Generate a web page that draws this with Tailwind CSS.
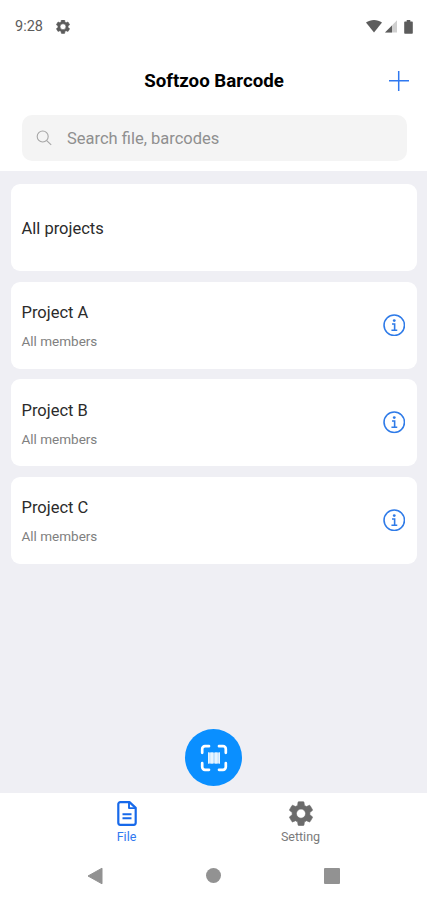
<!DOCTYPE html>
<html lang="en">
<head>
<meta charset="utf-8">
<title>Softzoo Barcode</title>
<script src="https://cdn.jsdelivr.net/npm/@tailwindcss/browser@4"></script>
</head>
<body class="w-[427px] h-[900px] overflow-hidden flex flex-col bg-white font-[Roboto,sans-serif]">
<svg class="hidden">
  <symbol id="info" viewBox="0 0 24 24"><circle cx="12" cy="12" r="10.9" fill="none" stroke="currentColor" stroke-width="1.7"/><circle cx="12" cy="7" r="1.5" fill="currentColor"/><path d="M9.6 10.6h2.8v6.6M9 17.4h6.2" fill="none" stroke="currentColor" stroke-width="1.7"/></symbol>
</svg>
<div class="h-[53px] shrink-0 flex items-center pl-[15px] pr-[14px] text-[#5c5c5c]">
  <span class="text-[14.5px] leading-5 w-[41px] pt-px">9:28</span>
  <svg class="w-[14px] h-[14px]" viewBox="2 2.4 20 20"><path fill="currentColor" stroke="currentColor" stroke-width=".8" fill-rule="evenodd" d="M19.14 12.94c.04-.3.06-.61.06-.94s-.02-.64-.07-.94l2.03-1.58a.49.49 0 0 0 .12-.61l-1.92-3.32a.49.49 0 0 0-.59-.22l-2.39.96c-.5-.38-1.03-.7-1.62-.94l-.36-2.54A.48.48 0 0 0 13.92 2.4h-3.84a.47.47 0 0 0-.47.41l-.36 2.54c-.59.24-1.13.57-1.62.94l-2.39-.96a.48.48 0 0 0-.59.22L2.74 8.87a.47.47 0 0 0 .12.61l2.03 1.58a7 7 0 0 0 0 1.88l-2.03 1.58a.49.49 0 0 0-.12.61l1.92 3.32c.12.22.37.29.59.22l2.39-.96c.5.38 1.03.7 1.62.94l.36 2.54c.05.24.24.41.48.41h3.84c.24 0 .44-.17.47-.41l.36-2.54c.59-.24 1.13-.56 1.62-.94l2.39.96c.22.08.47 0 .59-.22l1.92-3.32a.47.47 0 0 0-.12-.61zM12 16.2a4.2 4.2 0 1 1 0-8.400 4.200 4.200 0 0 1 0 8.400z"/></svg>
  <div class="ml-auto flex items-center">
    <svg class="w-4 h-[13px]" viewBox="0 0 16 13"><path fill="currentColor" d="M0 2.600C4.600-.8 11.400-.8 16 2.600L8 12.600z"/></svg>
    <svg class="ml-[3px] w-3 h-[13px]" viewBox="0 0 12 13"><path fill="#cfcfcf" d="M12 .3v12.200H0z"/><path fill="currentColor" d="M7 5.400v7.100H0z"/></svg>
    <svg class="ml-[7px] w-[9px] h-[14px]" viewBox="0 0 9 14"><path fill="currentColor" d="M2.700 0h3.600v1.400H8a.8.8 0 0 1 .8.8V13a.8.8 0 0 1-.8.8H1a.8.8 0 0 1-.8-.8V2.200a.8.8 0 0 1 .8-.8h1.700z"/></svg>
  </div>
</div>
<header class="h-[62px] shrink-0 grid grid-cols-[1fr_auto_1fr] items-center pb-[7px] pl-[19px] pr-[18px]">
  <span></span>
  <h1 class="text-[18.700px] leading-6 font-bold text-black pt-px">Softzoo Barcode</h1>
  <svg class="justify-self-end w-5 h-5" viewBox="0 0 20 20"><path d="M9.700 0v20M0 9.700h20" stroke="#2f78f0" stroke-width="1.500"/></svg>
</header>
<div class="shrink-0 h-[56px] pl-[22px] pr-[20px]">
  <div class="h-[46px] rounded-[10px] bg-[#f4f4f4] flex items-center pl-[14px]">
    <svg class="w-4 h-4" viewBox="0 0 16 16" fill="none" stroke="#a6a6a6" stroke-width="1.100"><circle cx="6.700" cy="6.500" r="5.500"/><path d="M10.700 10.600l4.500 4.300"/></svg>
    <span class="ml-[15px] pt-[2px] text-[16.500px] leading-6 text-[#8f8f8f]">Search file, barcodes</span>
  </div>
</div>
<main class="flex-1 bg-[#efeff4] px-[11px] pr-[10px] pt-[13px] flex flex-col gap-[10.500px] text-[#2b2b2b]">
  <section class="h-[87px] rounded-[9px] bg-white flex items-center px-[10.500px]"><div class="text-[16.500px] leading-6 pt-[2px]">All projects</div></section>
  <section class="h-[87px] rounded-[9px] bg-white flex items-center justify-between pl-[10.500px] pr-[12px]"><div class="pt-[2px]"><div class="text-[16.500px] leading-6">Project A</div><div class="mt-[6px] text-[13.500px] leading-5 text-[#808080]">All members</div></div><svg class="w-[22.500px] h-[22.500px] text-[#2f7be8]"><use href="#info"/></svg></section>
  <section class="h-[87px] rounded-[9px] bg-white flex items-center justify-between pl-[10.500px] pr-[12px]"><div class="pt-[2px]"><div class="text-[16.500px] leading-6">Project B</div><div class="mt-[6px] text-[13.500px] leading-5 text-[#808080]">All members</div></div><svg class="w-[22.500px] h-[22.500px] text-[#2f7be8]"><use href="#info"/></svg></section>
  <section class="h-[87px] rounded-[9px] bg-white flex items-center justify-between pl-[10.500px] pr-[12px]"><div class="pt-[2px]"><div class="text-[16.500px] leading-6">Project C</div><div class="mt-[6px] text-[13.500px] leading-5 text-[#808080]">All members</div></div><svg class="w-[22.500px] h-[22.500px] text-[#2f7be8]"><use href="#info"/></svg></section>
  <button class="mt-auto mb-[7px] ml-[174px] w-[57px] h-[57px] rounded-full bg-[#0a8fff] flex items-center justify-center">
    <svg class="w-[28px] h-[28px]" viewBox="0 0 28 28"><path fill="none" stroke="#fff" stroke-width="2.700" stroke-linecap="round" d="M2.200 8.800V5a2.800 2.800 0 0 1 2.800-2.800h4M19 2.200h4A2.800 2.800 0 0 1 25.800 5v3.800M25.800 19.200V23a2.800 2.800 0 0 1-2.800 2.800h-4M9 25.800H5A2.800 2.800 0 0 1 2.200 23v-3.800"/><path fill="#c2e3ff" d="M8 8.500h12v11H8z"/><path fill="#e8f5ff" d="M8 8.500h1.200v11H8zM10.500 8.500h2.500v11h-2.500zM15 8.500h2.500v11H15zM18.800 8.500H20v11h-1.200z"/></svg>
  </button>
</main>
<nav class="h-[58px] shrink-0 flex px-[39.500px] pt-[7px] text-[12.500px] leading-[18px]">
  <div class="flex-1 flex flex-col items-center text-[#2f78f0]">
    <svg class="w-[20px] h-[27px]" viewBox="0 0 20 27" fill="none" stroke="#1769ea" stroke-width="2.200" stroke-linejoin="round"><path d="M12.500 2.100H3.300a2 2 0 0 0-2 2V22.800a2 2 0 0 0 2 2H16.700a2 2 0 0 0 2-2V7.900z"/><path d="M12 2.500V8.100h6.300M5.500 14.300h9M5.500 18.300h9" stroke-width="1.900"/></svg>
    <span class="mt-px">File</span>
  </div>
  <div class="flex-1 flex flex-col items-center text-[#7a7a7a]">
    <svg class="w-[26px] h-[27px]" viewBox="1.500 1 21 21.800"><path fill="#6b6b6b" stroke="#6b6b6b" stroke-width=".5" fill-rule="evenodd" d="M19.140 12.940c.04-.3.06-.61.06-.94s-.02-.64-.07-.94l2.030-1.580a.49.49 0 0 0 .12-.61l-1.920-3.320a.49.49 0 0 0-.59-.22l-2.390.96c-.5-.38-1.030-.7-1.620-.94l-.36-2.540A.48.48 0 0 0 13.920 2.400h-3.840a.47.47 0 0 0-.47.410l-.36 2.540c-.59.24-1.130.57-1.620.94l-2.390-.96a.48.48 0 0 0-.59.22L2.740 8.870a.47.47 0 0 0 .12.61l2.030 1.580a7 7 0 0 0 0 1.880l-2.030 1.580a.49.49 0 0 0-.12.61l1.920 3.320c.12.22.37.29.59.22l2.390-.96c.5.38 1.030.7 1.620.94l.36 2.540c.05.24.24.41.48.41h3.840c.24 0 .44-.17.47-.41l.36-2.540c.59-.24 1.130-.56 1.620-.94l2.390.96c.22.08.47 0 .59-.22l1.920-3.320a.47.47 0 0 0-.12-.61zM12 15.700a3.700 3.700 0 1 1 0-7.400 3.700 3.700 0 0 1 0 7.400z"/></svg>
    <span class="mt-px">Setting</span>
  </div>
</nav>
<div class="h-[49px] shrink-0 flex items-center justify-between pl-[87px] pr-[87px] text-[#929292]">
  <svg class="w-4 h-[18px]" viewBox="0 0 16 18"><path fill="currentColor" stroke="currentColor" stroke-linejoin="round" d="M15 1.200v15.600L1 9z"/></svg>
  <span class="w-[15px] h-[15px] rounded-full bg-[#929292]"></span>
  <span class="w-4 h-4 rounded-[1px] bg-[#929292]"></span>
</div>
</body>
</html>
